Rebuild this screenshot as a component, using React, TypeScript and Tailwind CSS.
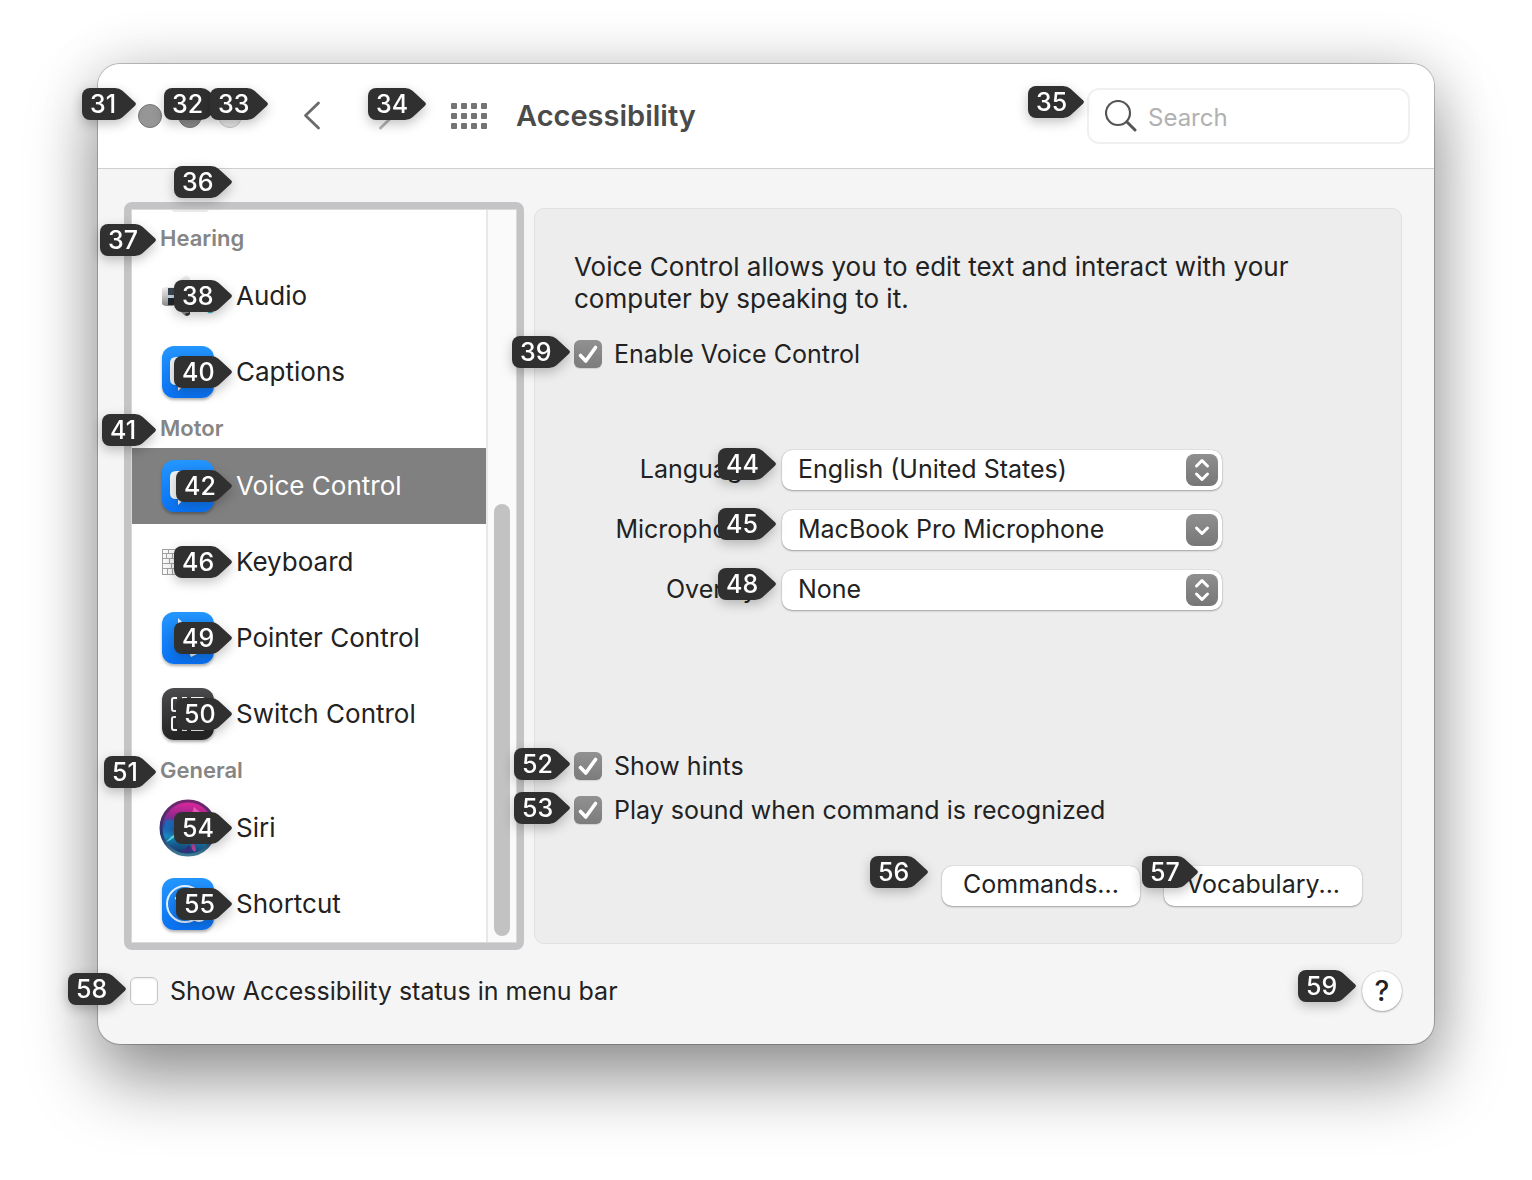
import React, { useState } from "react";

function Badge({ n, width = "w-[58px]", place }: { n: number; width?: string; place: string }) {
  return (
    <span
      aria-hidden="true"
      className={`pointer-events-none absolute z-10 flex h-8 text-[25px] font-medium leading-8 text-white drop-shadow-[0_4px_6px_rgba(0,0,0,0.24)] ${width} ${place}`}
    >
      <span className="flex-1 rounded-l-lg bg-[#303030]" />
      <svg viewBox="0 0 22 32" className="h-8 w-[22px] shrink-0" fill="#303030">
        <path d="M-1 0H1Q5.500 0 8.500 2.800L21 14.300Q22.800 16 21 17.700L8.500 29.200Q5.500 32 1 32H-1Z" />
      </svg>
      <span className="absolute left-2 top-0">{n}</span>
    </span>
  );
}

function Tile({ dark = false, children }: { dark?: boolean; children: React.ReactNode }) {
  return (
    <span
      className={`block size-[52px] rounded-xl shadow-[0_2px_3px_rgba(0,0,0,0.3)] bg-linear-to-b ${
        dark ? "from-[#4b4b4e] to-[#252526]" : "from-[#2496ff] to-[#0a72f5]"
      }`}
    >
      <svg viewBox="0 0 52 52" className="size-[52px]" fill="none">
        {children}
      </svg>
    </span>
  );
}

const speech = (
  <path d="M14 11H38Q44 11 44 17V33Q44 39 38 39H22L16 45V39H14Q8 39 8 33V17Q8 11 14 11Z" fill="#f1f3f6" />
);

const audioIcon = (
  <svg viewBox="0 0 52 52" className="size-[52px]">
    <defs>
      <linearGradient id="metal" x1="0" y1="0" x2="0" y2="1">
        <stop offset="0" stopColor="#f0f0f0" />
        <stop offset="0.5" stopColor="#c4c4c4" />
        <stop offset="1" stopColor="#8a8a8a" />
      </linearGradient>
    </defs>
    <path d="M12 17L20 8Q25 3 28 8V44Q25 48 21 44L12 35Z" fill="url(#metal)" />
    <path d="M24 43Q27 44 28 41V44Q26 47 23 45Z" fill="#333" />
    <rect x="-1" y="17" width="16" height="19" rx="5" fill="url(#metal)" />
    <rect x="6" y="18" width="6" height="7" fill="#3d4650" />
    <rect x="6" y="25" width="6" height="3" fill="#c3d4e4" />
    <rect x="6" y="28" width="6" height="7" fill="#23282e" />
    <path d="M46 42Q49 43 51 41" stroke="#48b9ca" strokeWidth="2" fill="none" />
  </svg>
);

const keyboardIcon = (
  <svg viewBox="0 0 52 52" className="size-[52px]" fill="none" stroke="#a2a2a2">
    <rect x="0.500" y="13.500" width="51" height="25" fill="#fafafa" />
    <path d="M0 17.500H52M0 22.500H52M0 27.500H52M0 32.500H52M6.500 14V18M13.500 14V18M4.500 18V23M10.500 18V23M7.500 23V28M13.500 23V28M9.500 28V33M15.500 28V33M5.500 33V38M10.500 33V38M20.500 14V38M28.500 14V38M36.500 14V38M44.500 14V38" />
  </svg>
);

const siriIcon = (
  <svg viewBox="0 0 58 58" className="-m-[3px] size-[58px]">
    <defs>
      <linearGradient id="siri" x1="0.500" y1="0" x2="0.350" y2="1">
        <stop offset="0" stopColor="#e0279b" />
        <stop offset="0.300" stopColor="#9b2a93" />
        <stop offset="0.500" stopColor="#2c4ea8" />
        <stop offset="0.700" stopColor="#168fc4" />
        <stop offset="1" stopColor="#1c2862" />
      </linearGradient>
      <linearGradient id="rim" x1="0" y1="0" x2="0" y2="1">
        <stop offset="0" stopColor="#71286e" />
        <stop offset="0.600" stopColor="#26356f" />
        <stop offset="1" stopColor="#3f7d99" />
      </linearGradient>
    </defs>
    <circle cx="29" cy="29" r="27" fill="url(#siri)" stroke="url(#rim)" strokeWidth="3" />
    <path d="M7 43Q15 40 27 29L13 37Z" fill="#68e2e8" />
    <path d="M6 22Q16 18 26 28Q12 27 5 34Z" fill="#1671be" opacity="0.800" />
    <path d="M29 29L33 50Q36 55 37 50Z" fill="#c545a5" />
    <path d="M29 28L35 8L41 13Z" fill="#f05bb7" />
    <path d="M30 46L22 54L33 52Z" fill="#40308a" />
  </svg>
);

type Row = { n: number; label: string; icon: React.ReactNode; w?: string };
const groups: { n: number; w: string; title: string; rows: Row[] }[] = [
  {
    n: 37,
    w: "w-14",
    title: "Hearing",
    rows: [
      { n: 38, label: "Audio", icon: audioIcon },
      { n: 40, label: "Captions", icon: <Tile>{speech}</Tile> },
    ],
  },
  {
    n: 41,
    w: "w-[54px]",
    title: "Motor",
    rows: [
      { n: 42, label: "Voice Control", w: "w-14", icon: <Tile>{speech}</Tile> },
      { n: 46, label: "Keyboard", icon: keyboardIcon },
      {
        n: 49,
        label: "Pointer Control",
        icon: (
          <Tile>
            <path d="M16 6L37 27L29 28L35 42L29 45L23 31L16 37Z" fill="#e9f2ff" />
          </Tile>
        ),
      },
      {
        n: 50,
        label: "Switch Control",
        w: "w-14",
        icon: (
          <Tile dark>
            <path
              d="M15 10H12Q10 10 10 12V21Q10 23 12 23H15M20 10H25M29 10H40Q42 10 42 12V23M15 29H12Q10 29 10 31V40Q10 42 12 42H15M20 42H25M29 42H40Q42 42 42 40V29"
              stroke="#fff"
              strokeWidth="2"
            />
          </Tile>
        ),
      },
    ],
  },
  {
    n: 51,
    w: "w-[52px]",
    title: "General",
    rows: [
      { n: 54, label: "Siri", icon: siriIcon },
      {
        n: 55,
        label: "Shortcut",
        w: "w-14",
        icon: (
          <Tile>
            <circle cx="23" cy="26" r="18" stroke="#e8f3ff" strokeWidth="2" />
            <circle cx="23" cy="18" r="2.500" fill="#fff" />
            <path d="M13 20L23 23L33 20M23 23V29L18 38M23 29L28 38" stroke="#fff" strokeWidth="2" />
            <circle cx="37" cy="35" r="9" fill="#fff" />
          </Tile>
        ),
      },
    ],
  },
];

function Check({ n, w, label, on = false, id }: { n: number; w?: string; label: string; on?: boolean; id: string }) {
  return (
    <div className="relative flex h-7 items-center gap-3">
      <Badge n={n} width={w} place="right-full mr-1 -top-1" />
      <span className="relative size-7 shrink-0">
        <input
          id={id}
          type="checkbox"
          defaultChecked={on}
          className="peer block size-7 appearance-none rounded-md border border-[#c6c6c6] bg-white shadow-[inset_0_1px_2px_rgba(0,0,0,0.08)] checked:border-0 checked:bg-linear-to-b checked:from-[#919191] checked:to-[#7c7c7c] checked:shadow-[0_1px_1px_rgba(0,0,0,0.12)]"
        />
        <svg
          viewBox="0 0 28 28"
          className="pointer-events-none absolute inset-0 hidden size-7 peer-checked:block"
          fill="none"
          stroke="#fff"
          strokeWidth="3.600"
          strokeLinecap="round"
          strokeLinejoin="round"
        >
          <path d="M6.500 15.500L11.800 21L21.500 7.500" />
        </svg>
      </span>
      <label htmlFor={id} className="whitespace-nowrap leading-[30px]">
        {label}
      </label>
    </div>
  );
}

function Picker({ n, label, value, id, single = false }: { n: number; label: string; value: string; id: string; single?: boolean }) {
  return (
    <div className="flex h-10 items-center">
      <label htmlFor={id} className="w-[190px] shrink-0 text-right">
        {label}
      </label>
      <div className="relative ml-[18px] h-10 w-full max-w-[440px]">
        <Badge n={n} place="right-full mr-1.5 -top-0.5" />
        <select
          id={id}
          className="block h-10 w-full appearance-none rounded-[10px] bg-white pb-0.5 pl-4 pr-12 leading-9 shadow-[0_0_1px_rgba(0,0,0,0.35),0_1px_2px_rgba(0,0,0,0.3)]"
        >
          <option>{value}</option>
        </select>
        <span className="pointer-events-none absolute right-1 top-1 size-8 rounded-lg bg-linear-to-b from-[#8f8f8f] to-[#777]">
          <svg
            viewBox="0 0 32 32"
            className="size-8"
            fill="none"
            stroke="#fff"
            strokeWidth="3"
            strokeLinecap="round"
            strokeLinejoin="round"
          >
            {single ? <path d="M10.500 14L16 19.500L21.500 14" /> : <path d="M10.500 12L16 6.500L21.500 12M10.500 20L16 25.500L21.500 20" />}
          </svg>
        </span>
      </div>
    </div>
  );
}

export default function App() {
  const [selected, setSelected] = useState("Voice Control");
  const button =
    "block h-10 w-[198px] rounded-[10px] bg-white pb-1 text-center leading-9 shadow-[0_0_1px_rgba(0,0,0,0.35),0_1px_2px_rgba(0,0,0,0.3)]";
  return (
    <div className="min-h-screen overflow-hidden bg-white px-[98px] pb-[136px] pt-16 font-['Inter',sans-serif] text-[25px] text-[#222]">
      <main className="rounded-[22px] bg-[#f5f5f5] shadow-[0_0_0_1px_rgba(0,0,0,0.22),0_36px_70px_rgba(0,0,0,0.4),0_0_60px_rgba(0,0,0,0.14)]">
        <header className="flex h-[105px] items-center rounded-t-[22px] border-b border-[#cfcfcf] bg-white pl-10 pr-6">
          <div className="flex gap-4">
            <span className="relative size-6">
              <button aria-label="Close" className="block size-6 rounded-full border border-[#777] bg-[#969696]" />
              <Badge n={31} width="w-[54px]" place="right-full mr-0.5 -top-4" />
            </span>
            <span className="relative size-6">
              <button aria-label="Minimize" className="block size-6 rounded-full border border-[#777] bg-[#8c8c8c]" />
              <Badge n={32} place="-left-3.5 -top-4" />
            </span>
            <span className="relative size-6">
              <button aria-label="Zoom" className="block size-6 rounded-full border border-[#c6c6c6] bg-[#e8e8e8]" />
              <Badge n={33} place="-left-2 -top-4" />
            </span>
          </div>
          <button aria-label="Back" className="ml-[60px]">
            <svg viewBox="0 0 20 30" className="h-[30px] w-5" fill="none" stroke="#6a6a6a" strokeWidth="2.800" strokeLinecap="round" strokeLinejoin="round">
              <path d="M16.500 2L3.500 14.500L16.500 27" />
            </svg>
          </button>
          <span className="relative ml-[55px] h-[30px] w-5">
            <button aria-label="Forward" className="block">
              <svg viewBox="0 0 20 30" className="h-[30px] w-5" fill="none" stroke="#b4b4b4" strokeWidth="2.800" strokeLinecap="round" strokeLinejoin="round">
                <path d="M3.500 2L16.500 14.500L3.500 27" />
              </svg>
            </button>
            <Badge n={34} place="-left-[9px] -top-[13px]" />
          </span>
          <button aria-label="Show All" className="ml-[54px]">
            <svg viewBox="0 0 36 26" className="h-[26px] w-9" fill="#747474">
              {[0, 10, 20, 30].map((x) => [0, 10, 20].map((y) => <rect key={`${x}-${y}`} x={x} y={y} width="6" height="6" rx="1" />))}
            </svg>
          </button>
          <h1 className="ml-[29px] whitespace-nowrap text-[29px] font-semibold leading-8 text-[#4b4b4b]">Accessibility</h1>
          <div className="relative ml-auto">
            <Badge n={35} width="w-14" place="right-full mr-[3px] -top-0.5" />
            <label className="flex h-14 w-[323px] items-center rounded-xl border-2 border-[#f0f0f0] pl-4">
              <svg viewBox="0 0 32 32" className="size-8 shrink-0" fill="none" stroke="#555" strokeLinecap="round">
                <circle cx="13" cy="13" r="12" strokeWidth="2.200" />
                <path d="M22 22L30 30" strokeWidth="3" />
              </svg>
              <input
                aria-label="Search"
                type="text"
                placeholder="Search"
                className="ml-[11px] w-0 flex-1 pt-1 text-[24px] outline-none placeholder:text-[#b1b1b1]"
              />
            </label>
          </div>
        </header>

        <div className="pb-[33px] pl-[26px] pr-8 pt-[33px]">
          <div className="flex gap-2.5">
            <nav aria-label="Accessibility features" className="w-[400px] shrink-0 rounded-lg border-[7px] border-[#c4c4c6]">
              <div className="flex border border-[#d9d9d9] bg-white">
                <div className="min-w-0 flex-1">
                  <div className="relative h-2.5">
                    <span className="absolute left-10 top-0 h-0.5 w-9 rounded-b-full bg-[#ececec]" />
                    <Badge n={36} place="left-[42px] -top-11" />
                  </div>
                  {groups.map((g) => (
                    <section key={g.title}>
                      <h2 className="relative h-[38px] pl-7 text-[22px] font-semibold leading-9 text-[#858585]">
                        {g.title}
                        <Badge n={g.n} width={g.w} place="right-full -mr-6 top-1" />
                      </h2>
                      <ul>
                        {g.rows.map((r) => (
                          <li key={r.label}>
                            <button
                              onClick={() => setSelected(r.label)}
                              className={`relative flex h-[76px] w-full items-center gap-[22px] pl-[30px] text-left ${
                                selected === r.label ? "bg-[#808080] text-white" : ""
                              }`}
                            >
                              <span className="size-[52px] shrink-0">{r.icon}</span>
                              <span className="whitespace-nowrap text-[26px] leading-10">{r.label}</span>
                              <span className="absolute left-[100px] top-[22px]">
                                <Badge n={r.n} width={r.w} place="right-0 top-0" />
                              </span>
                            </button>
                          </li>
                        ))}
                      </ul>
                    </section>
                  ))}
                </div>
                <div className="flex w-[30px] items-end border-l-2 border-[#e8e8e8] bg-[#fafafa] pb-1.5 pl-1.5">
                  <div className="h-[432px] w-4 rounded-full bg-[#c2c2c2]" />
                </div>
              </div>
            </nav>

            <section className="mb-1.5 mt-1.5 flex min-w-0 flex-1 flex-col rounded-[10px] border border-[#e1e1e1] bg-[#ededed] px-[39px] pb-[37px] pt-[42px]">
              <p className="max-w-[740px] text-[26px] leading-8">
                Voice Control allows you to edit text and interact with your computer by speaking to it.
              </p>
              <div className="mt-[25px]">
                <Check id="enable" n={39} label="Enable Voice Control" on />
              </div>
              <div className="mt-[82px] flex flex-col gap-5">
                <Picker id="language" n={44} label="Language:" value="English (United States)" />
                <Picker id="microphone" n={45} label="Microphone:" value="MacBook Pro Microphone" single />
                <Picker id="overlay" n={48} label="Overlay:" value="None" />
              </div>
              <div className="mt-auto flex flex-col gap-4">
                <Check id="hints" n={52} w="w-14" label="Show hints" on />
                <Check id="sound" n={53} w="w-14" label="Play sound when command is recognized" on />
              </div>
              <div className="mt-[42px] flex justify-end gap-6">
                <div className="relative">
                  <button className={button}>Commands...</button>
                  <Badge n={56} place="right-full mr-3.5 -top-2.5" />
                </div>
                <div className="relative">
                  <button className={button}>Vocabulary...</button>
                  <Badge n={57} width="w-14" place="right-full -mr-[34px] -top-2.5" />
                </div>
              </div>
            </section>
          </div>

          <footer className="mt-[21px] flex items-center justify-between pl-1.5">
            <Check id="status" n={58} label="Show Accessibility status in menu bar" />
            <div className="relative">
              <button
                aria-label="Help"
                className="block size-10 rounded-full bg-white text-[28px] font-medium leading-10 shadow-[0_0_1px_rgba(0,0,0,0.35),0_1px_2px_rgba(0,0,0,0.3)]"
              >
                ?
              </button>
              <Badge n={59} place="right-full mr-1.5 -top-px" />
            </div>
          </footer>
        </div>
      </main>
    </div>
  );
}
